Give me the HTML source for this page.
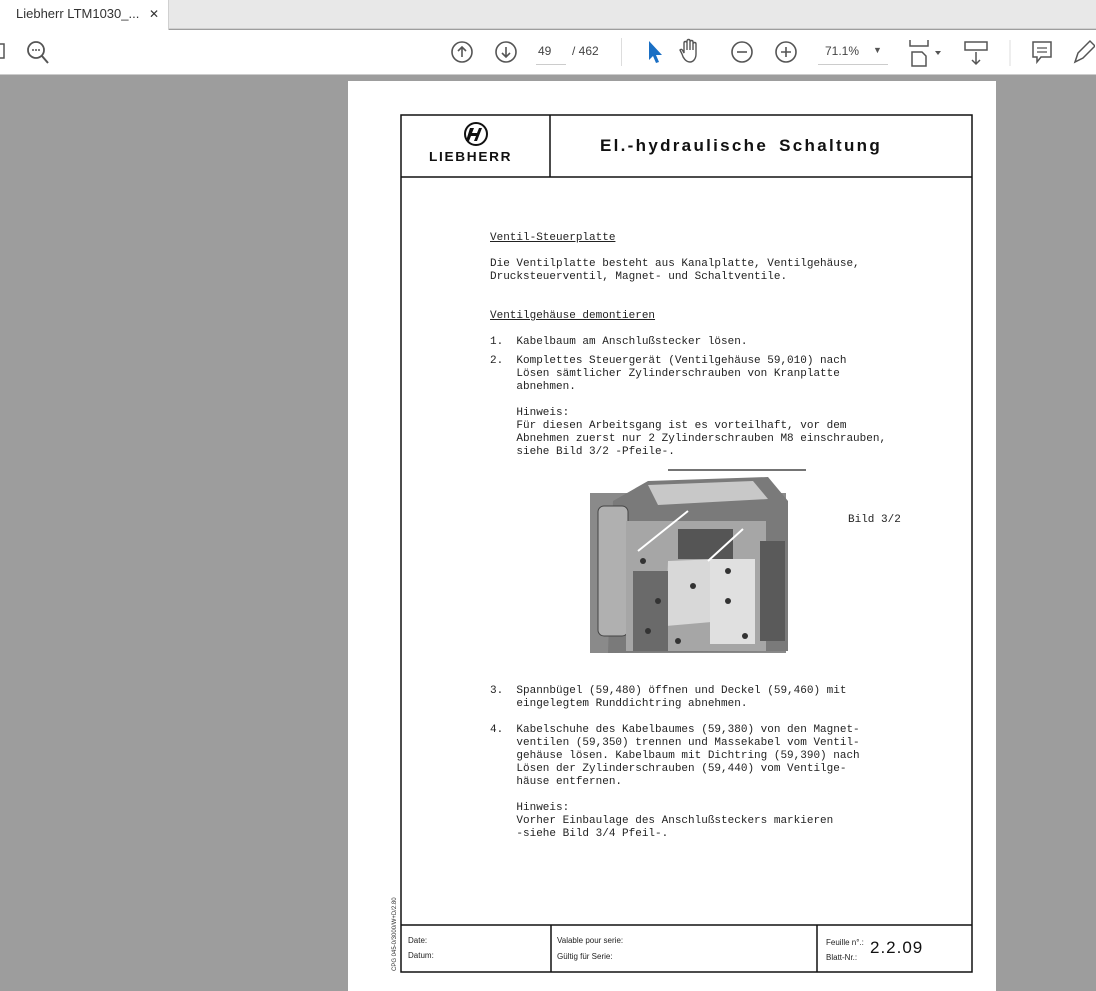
<!DOCTYPE html>
<html><head><meta charset="utf-8"><style>
*{margin:0;padding:0;box-sizing:border-box}
body{width:1096px;height:987px;overflow:hidden;background:#9d9d9d;font-family:"Liberation Sans",sans-serif;position:relative}
.tabbar{position:absolute;left:0;top:0;width:1096px;height:29px;background:#e8e8e8;border-bottom:1px solid #d0d0d0}
.tab{position:absolute;left:0;top:0;width:169px;height:30px;background:#fff;border-right:1px solid #d0d0d0;font-size:13px;color:#333;padding:6px 0 0 16px}
.tb{position:absolute;left:0;top:30px;width:1096px;height:45px;background:#fff;border-bottom:1px solid #ccc}
.ic{position:absolute}
.page{position:absolute;left:348px;top:81px;width:648px;height:910px;background:#fff}
.t{position:absolute;font-family:"Liberation Mono",monospace;font-size:11px;color:#222;white-space:pre;line-height:13px}
.u{text-decoration:underline}
.sm{position:absolute;font-size:8px;color:#222;font-family:"Liberation Sans",sans-serif}
</style></head><body>
<div class="tabbar"><div class="tab">Liebherr LTM1030_... <span style="margin-left:6px;font-size:12px">✕</span></div></div>
<div class="tb">
<svg class="ic" style="left:0;top:10px" width="60" height="26" viewBox="0 0 60 26"><rect x="-6" y="4" width="10" height="14" fill="none" stroke="#555" stroke-width="1.5"/><circle cx="36" cy="10" r="8" fill="none" stroke="#555" stroke-width="1.8"/><line x1="42" y1="16" x2="48" y2="23" stroke="#555" stroke-width="2"/><circle cx="33" cy="10" r="1" fill="#555"/><circle cx="36" cy="10" r="1" fill="#555"/><circle cx="39" cy="10" r="1" fill="#555"/></svg>
<svg class="ic" style="left:450px;top:10px" width="70" height="24"><circle cx="12" cy="12" r="10" fill="none" stroke="#555" stroke-width="1.6"/><path d="M12 17V7M8 11l4-4 4 4" fill="none" stroke="#555" stroke-width="1.6"/><circle cx="56" cy="12" r="10" fill="none" stroke="#555" stroke-width="1.6"/><path d="M56 7v10M52 13l4 4 4-4" fill="none" stroke="#555" stroke-width="1.6"/></svg>
<div style="position:absolute;left:538px;top:14px;font-size:12px;color:#444">49</div>
<div style="position:absolute;left:536px;top:34px;width:30px;border-top:1px solid #ccc"></div>
<div style="position:absolute;left:572px;top:14px;font-size:12px;color:#444">/ 462</div>
<div style="position:absolute;left:621px;top:8px;height:28px;border-left:1px solid #ddd"></div>
<svg class="ic" style="left:640px;top:8px" width="190" height="28"><path d="M9 3v19l4-4 3 7 3-1-3-7h6z" fill="#1a6fc4"/><path d="M50 24c-4 0-7-4-8-8l-2-4c1-1 2-1 3 1l1 2V5c0-2 3-2 3 0v7-9c0-2 3-2 3 0v9-8c0-2 3-2 3 0v8-6c0-2 3-2 3 0v10c0 5-3 8-6 8z" fill="none" stroke="#555" stroke-width="1.4"/><circle cx="102" cy="14" r="10" fill="none" stroke="#555" stroke-width="1.6"/><path d="M97 14h10" stroke="#555" stroke-width="1.6"/><circle cx="146" cy="14" r="10" fill="none" stroke="#555" stroke-width="1.6"/><path d="M141 14h10M146 9v10" stroke="#555" stroke-width="1.6"/></svg>
<div style="position:absolute;left:825px;top:14px;font-size:12px;color:#444">71.1%</div>
<div style="position:absolute;left:873px;top:15px;font-size:9px;color:#555">▼</div>
<div style="position:absolute;left:818px;top:34px;width:70px;border-top:1px solid #ccc"></div>
<svg class="ic" style="left:905px;top:8px" width="190" height="30"><path d="M5 2v6h18V2M7 14h10l4 4v10H7z" fill="none" stroke="#555" stroke-width="1.5"/><path d="M30 13l3 4 3-4z" fill="#555"/><rect x="60" y="4" width="22" height="8" fill="none" stroke="#555" stroke-width="1.5"/><path d="M71 14v12M67 22l4 4 4-4" fill="none" stroke="#555" stroke-width="1.5"/><line x1="105" y1="2" x2="105" y2="28" stroke="#ddd"/><path d="M128 4h18v15h-10l-4 5v-5h-4z" fill="none" stroke="#555" stroke-width="1.5"/><path d="M132 10h10M132 14h10" stroke="#555" stroke-width="1.3"/><path d="M170 24l3-9 12-12 5 5-12 12z" fill="none" stroke="#555" stroke-width="1.5"/></svg>
</div>

<div class="page">
<svg style="position:absolute;left:0;top:0" width="648" height="910">
<g fill="none" stroke="#111" stroke-width="1.5">
<rect x="53" y="34" width="571" height="857"/>
<line x1="53" y1="96" x2="624" y2="96"/>
<line x1="202" y1="34" x2="202" y2="96"/>
<line x1="53" y1="844" x2="624" y2="844"/>
<line x1="203" y1="844" x2="203" y2="891"/>
<line x1="469" y1="844" x2="469" y2="891"/>
</g>
<circle cx="128" cy="53" r="11" fill="#fff" stroke="#111" stroke-width="2"/>
<path d="M122 47h4l-2 5h5l2-5h3l-5 13h-3l2-5h-5l-2 5h-3z" fill="#111"/>
<line x1="320" y1="389" x2="458" y2="389" stroke="#222" stroke-width="1.2"/>
<g>
<rect x="242" y="412" width="196" height="160" fill="#8a8a8a"/>
<polygon points="265,420 300,400 420,396 440,420 440,570 260,572" fill="#7a7a7a"/>
<polygon points="300,404 405,400 420,418 310,424" fill="#c8c8c8"/>
<rect x="250" y="425" width="30" height="130" rx="6" fill="#b0b0b0" stroke="#444"/>
<rect x="278" y="440" width="140" height="130" fill="#a6a6a6"/>
<rect x="330" y="448" width="55" height="30" fill="#555"/>
<polygon points="320,480 372,478 375,540 318,545" fill="#d8d8d8"/>
<rect x="362" y="478" width="45" height="85" fill="#e0e0e0"/>
<rect x="285" y="490" width="35" height="80" fill="#6a6a6a"/>
<rect x="412" y="460" width="25" height="100" fill="#5a5a5a"/>
<line x1="340" y1="430" x2="290" y2="470" stroke="#fff" stroke-width="2"/>
<line x1="395" y1="448" x2="360" y2="480" stroke="#fff" stroke-width="2"/>
<g fill="#333"><circle cx="295" cy="480" r="3"/><circle cx="310" cy="520" r="3"/><circle cx="345" cy="505" r="3"/><circle cx="380" cy="490" r="3"/><circle cx="380" cy="520" r="3"/><circle cx="397" cy="555" r="3"/><circle cx="300" cy="550" r="3"/><circle cx="330" cy="560" r="3"/></g>
</g>
</svg>
<div style="position:absolute;left:81px;top:68px;font-size:13px;font-weight:bold;letter-spacing:1.6px;color:#111;transform:scaleX(1.05);transform-origin:0 0">LIEBHERR</div>
<div style="position:absolute;left:252px;top:55px;font-size:17px;letter-spacing:2.3px;color:#111;word-spacing:4px;font-weight:bold">El.-hydraulische Schaltung</div>

<div class="t u" style="left:142px;top:151px">Ventil-Steuerplatte</div>
<div class="t" style="left:142px;top:177px">Die Ventilplatte besteht aus Kanalplatte, Ventilgehäuse,
Drucksteuerventil, Magnet- und Schaltventile.</div>
<div class="t u" style="left:142px;top:229px">Ventilgehäuse demontieren</div>
<div class="t" style="left:142px;top:255px">1.  Kabelbaum am Anschlußstecker lösen.</div>
<div class="t" style="left:142px;top:274px">2.  Komplettes Steuergerät (Ventilgehäuse 59,010) nach
    Lösen sämtlicher Zylinderschrauben von Kranplatte
    abnehmen.

    Hinweis:
    Für diesen Arbeitsgang ist es vorteilhaft, vor dem
    Abnehmen zuerst nur 2 Zylinderschrauben M8 einschrauben,
    siehe Bild 3/2 -Pfeile-.</div>
<div class="t" style="left:500px;top:433px">Bild 3/2</div>
<div class="t" style="left:142px;top:604px">3.  Spannbügel (59,480) öffnen und Deckel (59,460) mit
    eingelegtem Runddichtring abnehmen.

4.  Kabelschuhe des Kabelbaumes (59,380) von den Magnet-
    ventilen (59,350) trennen und Massekabel vom Ventil-
    gehäuse lösen. Kabelbaum mit Dichtring (59,390) nach
    Lösen der Zylinderschrauben (59,440) vom Ventilge-
    häuse entfernen.

    Hinweis:
    Vorher Einbaulage des Anschlußsteckers markieren
    -siehe Bild 3/4 Pfeil-.</div>

<div class="sm" style="left:60px;top:855px">Date:</div>
<div class="sm" style="left:60px;top:870px">Datum:</div>
<div class="sm" style="left:209px;top:855px">Valable pour serie:</div>
<div class="sm" style="left:209px;top:871px">Gültig für Serie:</div>
<div class="sm" style="left:478px;top:857px">Feuille n°.:</div>
<div class="sm" style="left:478px;top:872px">Blatt-Nr.:</div>
<div style="position:absolute;left:522px;top:857px;font-size:17px;letter-spacing:1px;color:#111">2.2.09</div>
<div style="position:absolute;left:44px;top:890px;transform:rotate(-90deg);transform-origin:0 0;font-size:6px;color:#333;white-space:nowrap">CPG 045-0/3000/W+D/2.80</div>
</div>
</body></html>
